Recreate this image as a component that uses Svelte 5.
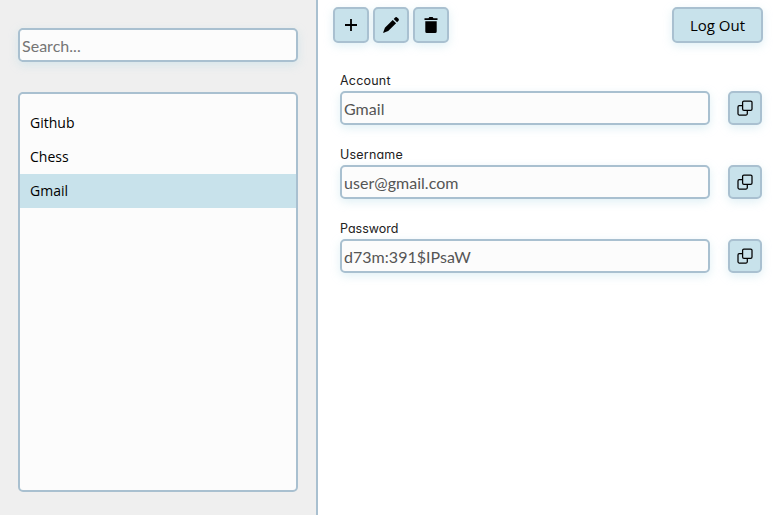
<script>
  let accounts = $state([
    { name: 'Github', username: '', password: '' },
    { name: 'Chess', username: '', password: '' },
    { name: 'Gmail', username: 'user@gmail.com', password: 'd73m:391$IPsaW' }
  ]);
  let selected = $state(2);
  let query = $state('');
  let fields = $derived([
    { label: 'Account', value: accounts[selected].name, spacing: 0.2 },
    { label: 'Username', value: accounts[selected].username, spacing: 0.2 },
    { label: 'Password', value: accounts[selected].password, spacing: 0 }
  ]);
</script>

<div class="app">
  <aside>
    <input class="box" type="text" placeholder="Search..." bind:value={query} />
    <ul>
      {#each accounts as account, i}
        <li class:active={i === selected}><button onclick={() => (selected = i)}>{account.name}</button></li>
      {/each}
    </ul>
  </aside>

  <main>
    <div class="toolbar">
      <button class="btn" aria-label="Add">
        <svg width="16" height="16" viewBox="0 0 16 16"><path d="M8 2v12M2 8h12" stroke="#000" stroke-width="1.8" /></svg>
      </button>
      <button class="btn" aria-label="Edit">
        <svg width="18" height="18" viewBox="0 0 18 18">
          <path d="M10.700 3.900 14.100 7.300 6.200 15.100 1 17l1.900-5.200zM11.700 2.900l1.200-1.200c.8-.8 1.700-.8 2.500 0l.9.9c.8.8.8 1.700 0 2.500l-1.200 1.200z" />
        </svg>
      </button>
      <button class="btn" aria-label="Delete">
        <svg width="16" height="18" viewBox="0 0 16 18">
          <path d="M1.500 2.200h4L6.400 1h3.200l.9 1.200h4v1.900h-13zM2.300 5.200h11.400v10.300a1.500 1.500 0 0 1-1.500 1.500h-8.400a1.500 1.500 0 0 1-1.500-1.500z" />
        </svg>
      </button>
      <button class="btn logout">Log Out</button>
    </div>

    <div class="fields">
      {#each fields as field}
        <div class="field">
          <label for={field.label} style="letter-spacing: {field.spacing}px">{field.label}</label>
          <div class="line">
            <input class="box" id={field.label} type="text" value={field.value} readonly />
            <button class="btn copy" aria-label="Copy">
              <svg width="16" height="16" viewBox="0 0 16 16" fill="none" stroke="#000" stroke-width="1.25">
                <rect x="5.600" y="1" width="9.400" height="9.400" rx="1.300" />
                <path d="M5.500 5.700H2.200Q1 5.700 1 6.900v6.900Q1 15 2.200 15h6.900q1.200 0 1.200-1.200v-3.300" />
              </svg>
            </button>
          </div>
        </div>
      {/each}
    </div>
  </main>
</div>

<style>
  :global(body) {
    margin: 0;
    overflow: hidden;
  }
  * {
    box-sizing: border-box;
  }
  .app {
    display: flex;
    height: 515px;
    background: #fff;
    font-family: 'Open Sans', sans-serif;
    color: #000;
  }
  aside {
    width: 318px;
    padding: 28px 18px 0;
    background: #efefef;
    border-right: 2px solid #a9c0d0;
  }
  .box {
    display: block;
    width: 100%;
    height: 34px;
    margin: 0;
    padding: 1px 2px;
    border: 2px solid #a9c0d0;
    border-radius: 5px;
    background: #fcfcfc;
    box-shadow: 0 3px 10px rgba(173, 216, 230, 0.38);
    color: #555;
    font: 16px Lato, sans-serif;
    letter-spacing: 0.03px;
    outline: none;
  }
  .box::placeholder {
    color: #757575;
    opacity: 1;
  }
  ul {
    height: 400px;
    margin: 30px 0 0;
    padding: 12px 0;
    border: 2px solid #a9c0d0;
    border-radius: 5px;
    background: #fcfcfc;
    list-style: none;
  }
  li button {
    display: block;
    width: 100%;
    height: 34px;
    padding: 0 10px 2px;
    border: 0;
    background: none;
    color: #000;
    font: 14px 'Open Sans', sans-serif;
    text-align: left;
  }
  li.active {
    background: #c8e2eb;
  }
  main {
    flex: 1;
    padding: 7px 17px 0 15px;
  }
  .toolbar {
    display: flex;
    gap: 4px;
  }
  .btn {
    display: flex;
    align-items: center;
    justify-content: center;
    flex: none;
    width: 36px;
    height: 36px;
    padding: 0;
    border: 2px solid #a9c0d0;
    border-radius: 5px;
    background: #c8e2eb;
    box-shadow: 0 3px 10px rgba(173, 216, 230, 0.38);
    color: #000;
    font: 15px 'Open Sans', sans-serif;
  }
  .logout {
    width: 91px;
    margin-left: auto;
  }
  .fields {
    padding: 28px 1px 0 7px;
  }
  .field {
    height: 74px;
  }
  label {
    display: block;
    height: 20px;
    padding-top: 1px;
    font: 12.500px/18px Inter, sans-serif;
    font-feature-settings: 'cv11';
    color: #222;
  }
  .line {
    display: flex;
    gap: 18px;
  }
  .line .box {
    flex: 1;
    width: auto;
    min-width: 0;
  }
  .copy {
    width: 34px;
    height: 34px;
  }
</style>
